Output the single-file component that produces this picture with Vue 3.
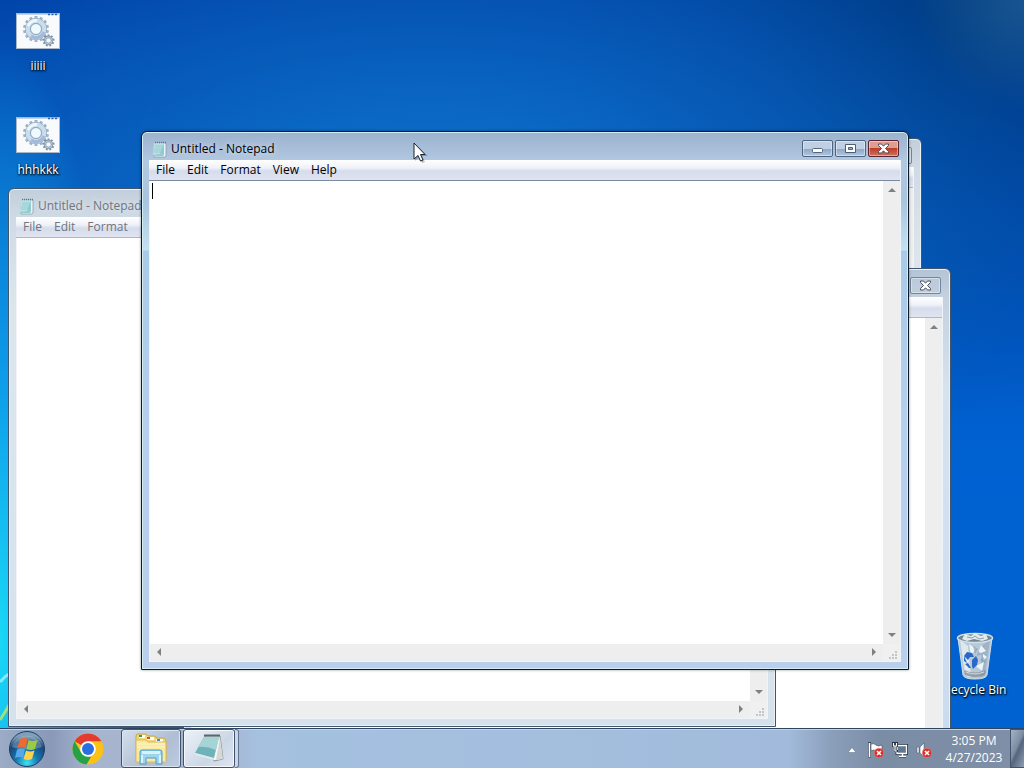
<script setup>
const menus = ['File', 'Edit', 'Format', 'View', 'Help']
const windows = [
  { id: 'back', title: '', menus: [], active: false },
  { id: 'right', title: '', menus: [], active: false },
  { id: 'left', title: 'Untitled - Notepad', menus: menus.slice(0, 3), active: false },
  { id: 'front', title: 'Untitled - Notepad', menus, active: true },
]
const files = ['iiiii', 'hhhkkk']
const teeth = Array.from({ length: 14 }, (_, i) => (i * 360) / 14)
const smallTeeth = Array.from({ length: 9 }, (_, i) => i * 40)
</script>

<template>
  <div class="screen">
    <main class="desktop">
      <svg class="wallpaper" viewBox="0 0 1024 728" preserveAspectRatio="none" aria-hidden="true">
        <path d="M0 682Q5 676 12 672" stroke="#a8f0ff" stroke-width="3" fill="none" opacity=".8" />
        <path d="M0 720Q6 711 12 700" stroke="#9fe07a" stroke-width="3" fill="none" />
      </svg>

      <ul class="files">
        <li v-for="name in files" :key="name">
          <a class="shortcut" href="#">
            <svg width="44" height="36" viewBox="0 0 44 36" aria-hidden="true">
              <rect x=".5" y=".5" width="43" height="35" fill="#f8fafc" stroke="#a9b7c8" />
              <path d="M1 1.500h42" stroke="#c3d3e6" />
              <path d="M32 1.500h9" stroke="#2b62ae" stroke-width="1.500" stroke-dasharray="2 1.500" />
              <g transform="translate(20 16)">
                <rect v-for="a in teeth" :key="a" x="-1.500" y="-13" width="3" height="5" fill="#9fb4c6" :transform="`rotate(${a})`" />
                <circle r="8.300" fill="none" stroke="#8fa6bd" stroke-width="5.400" />
                <circle r="8.300" fill="none" stroke="#c9ddec" stroke-width="4.400" />
                <path d="M-8 -3A8.500 8.500 0 0 1 1 -8.500" fill="none" stroke="#eef7fc" stroke-width="3" />
                <path d="M8 3A8.500 8.500 0 0 1 -5 7" fill="none" stroke="#a3b9da" stroke-width="3" />
                <circle r="5.500" fill="#eefafd" stroke="#8da5ba" />
              </g>
              <g transform="translate(32.500 27.500)">
                <rect v-for="a in smallTeeth" :key="a" x="-1" y="-6" width="2" height="3" fill="#7c8fa0" :transform="`rotate(${a})`" />
                <circle r="3.500" fill="#f3f8fb" stroke="#8499ac" stroke-width="2.400" />
                <circle r="3.500" fill="none" stroke="#bccddb" />
              </g>
            </svg>
            <span>{{ name }}</span>
          </a>
        </li>
      </ul>

      <a class="shortcut bin" href="#">
        <svg width="38" height="48" viewBox="0 0 38 48" aria-hidden="true">
          <path d="M2 6l5 37q1 4 12 4t12-4l5-37z" fill="#b7c9d7" stroke="#d0dfe9" />
          <path d="M4 8l5 34q1 3 6 3.500L12 14z" fill="#dde8ef" />
          <path d="M34 8l-5 34q-1 3-5 3.500l2-32z" fill="#9eb3c5" />
          <path d="M13 12l7 5-5 6zM25 13l5 6-8 3zM20 34l8-4-2 9zM9 30l4 5-3 2zM27 22l4 3-4 4z" fill="#edf4f8" />
          <path d="M17 14l5 3-3 5zM28 25l1 6-5-3zM22 19l4 3-5 2z" fill="#8199ae" opacity=".6" />
          <path d="M8 38q11 5 22 0l-1 5q-10 4-20 0z" fill="#87919a" opacity=".8" />
          <path d="M10 40q9 4 18 0" fill="none" stroke="#d4dbe0" />
          <ellipse cx="19" cy="6" rx="17.500" ry="4.500" fill="#708594" stroke="#d2dfe7" stroke-width="1.500" />
          <path d="M6 7L9 2l6 2 4-3 6 3 5-2 2 5-6 2-8-2-7 2z" fill="#e2eaee" />
          <path d="M11 5l5 1 3-2 4 3 5-1" fill="none" stroke="#8d9fac" />
          <path d="M8 24l3-4 5 1 2 4-4 0-2 3zM11 31l-3-2 0-5zM16 28l4-4 2 4-1 5-4 4-1-3zM12 31l3 5-2 0-4-4z" fill="#2a68c8" />
        </svg>
        <span>Recycle Bin</span>
      </a>

      <section
        v-for="w in windows"
        :key="w.id"
        class="window"
        :class="[w.id, { active: w.active }]"
        aria-label="Untitled - Notepad"
      >
        <header class="titlebar">
          <svg class="note" width="16" height="18" viewBox="0 0 16 18" aria-hidden="true">
            <path d="M3 3h11v13l-1 1H2z" fill="#e9f4f6" stroke="#7f98a6" stroke-width=".7" />
            <path d="M2 3h10v12l-1 1H1z" fill="#93cdd2" />
            <path d="M2 3h10l-4 11-7 1z" fill="#b9e1e4" />
            <path d="M3 6h8M3 8h8M2 10h9M2 12h9" stroke="#83bec8" stroke-width=".6" />
            <path d="M3 2.500h11" stroke="#5c7a86" stroke-width="1.500" stroke-dasharray="1 1" />
          </svg>
          <h1>{{ w.title }}</h1>
          <div class="controls">
            <button type="button" aria-label="Minimize">
              <svg width="13" height="11" viewBox="0 0 13 11"><rect x="1.500" y="5.500" width="10" height="4" rx="1" fill="#fff" stroke="#56657b" /></svg>
            </button>
            <button type="button" aria-label="Maximize">
              <svg width="13" height="11" viewBox="0 0 13 11"><path d="M1.500 1.500h10v8h-10z" fill="#fff" stroke="#4e5d73" /><path d="M4.500 4.500h4v2h-4z" fill="#9db3cf" stroke="#4e5d73" /></svg>
            </button>
            <button type="button" class="close" aria-label="Close">
              <svg width="13" height="11" viewBox="0 0 13 11"><path d="M1.500 1h3l2 2.200L8.500 1h3v1.500l-3 3 3 3V10h-3l-2-2.200L4.500 10h-3V8.500l3-3-3-3z" fill="#fff" stroke="#4b4f60" /></svg>
            </button>
          </div>
        </header>
        <div class="client">
          <nav class="menubar">
            <button v-for="m in w.menus" :key="m" type="button">{{ m }}</button>
          </nav>
          <div class="editor">
            <textarea aria-label="Document text" spellcheck="false"></textarea>
            <div class="vbar">
              <button type="button" aria-label="Scroll up"><svg width="8" height="5" viewBox="0 0 8 5"><path d="M0 5l4-4 4 4z" /></svg></button>
              <button type="button" aria-label="Scroll down"><svg width="8" height="5" viewBox="0 0 8 5"><path d="M0 0h8L4 4z" /></svg></button>
            </div>
            <div class="hbar">
              <button type="button" aria-label="Scroll left"><svg width="5" height="8" viewBox="0 0 5 8"><path d="M5 0v8L1 4z" /></svg></button>
              <button type="button" aria-label="Scroll right"><svg width="5" height="8" viewBox="0 0 5 8"><path d="M0 0v8l4-4z" /></svg></button>
            </div>
            <div class="grip">
              <svg width="9" height="9" viewBox="0 0 9 9"><path d="M7 0h2v2H7zM7 3h2v2H7zM7 6h2v2H7zM4 3h2v2H4zM4 6h2v2H4zM1 6h2v2H1z" fill="#c2c6ca" /></svg>
            </div>
            <span v-if="w.active" class="caret"></span>
          </div>
        </div>
      </section>

      <svg class="pointer" width="16" height="22" viewBox="0 0 16 22" aria-hidden="true">
        <path d="M2 2v17l4-4 3 6 3-1-3-6h6z" fill="#203050" opacity=".3" />
        <path d="M1 1v16l4-3.500 2.500 5.500 2.500-1-2.500-5.500H12z" fill="#fff" stroke="#1b2430" stroke-linejoin="round" />
      </svg>
    </main>

    <footer class="taskbar">
      <button type="button" class="start" aria-label="Start">
        <svg width="38" height="38" viewBox="0 0 38 38">
          <defs>
            <radialGradient id="orb" cx="50%" cy="90%" r="80%">
              <stop offset="0" stop-color="#3fe2f5" />
              <stop offset=".4" stop-color="#1678b0" />
              <stop offset=".8" stop-color="#1b4676" />
              <stop offset="1" stop-color="#7da1bc" />
            </radialGradient>
          </defs>
          <circle cx="19" cy="19" r="17.500" fill="url(#orb)" stroke="#1f3d60" />
          <path d="M4 17a15.500 15.500 0 0 1 30 0q-14 5-30 0z" fill="#fff" opacity=".25" />
          <path d="M12 9q4-2 7.500 0l-2 9q-4-2-8 0z" fill="#ee6a31" />
          <path d="M20.500 10q4 2 9 0l-2.500 9q-4 2-8.500 0z" fill="#9bcb45" />
          <path d="M9 19.500q4-2 8 0L15 28q-4-2-8 0z" fill="#55a9ea" />
          <path d="M18 20.500q4 2 8.500 0L24 29q-4 2-8.500 0z" fill="#fcd34b" />
        </svg>
      </button>
      <button type="button" class="pinned" aria-label="Google Chrome">
        <svg width="32" height="32" viewBox="0 0 32 32">
          <circle cx="16" cy="16" r="15.500" fill="#fbc116" />
          <path d="M2.600 8.200A15.500 15.500 0 0 1 29.400 8.200H16L9.200 12z" fill="#e33b2e" />
          <path d="M2.600 8.200L9.300 19.800 16 23.600l3 .4-4.500 7.500A15.500 15.500 0 0 1 2.600 8.200z" fill="#26a148" />
          <circle cx="16" cy="16" r="7.800" fill="#fff" />
          <circle cx="16" cy="16" r="6" fill="#2a6fe2" />
        </svg>
      </button>
      <button type="button" class="task" aria-label="Windows Explorer">
        <svg width="34" height="32" viewBox="0 0 34 32">
          <path d="M2 3l1-2h9l2 2h7l1 2h8l2 2v21H2z" fill="#eed679" stroke="#c6a950" />
          <path d="M5 2h6v3H5zM13 4h7v3h-7zM22 6h7v3h-7z" fill="#fff" />
          <path d="M5 2h3v2H5z" fill="#27a34a" /><path d="M13 4h3v2h-3z" fill="#e04634" /><path d="M23 6h3v2h-3z" fill="#3f88cb" />
          <path d="M2 7h10l2 2h18v20H2z" fill="#fae9a0" stroke="#d9bc62" />
          <path d="M3 11h28M3 14h28" stroke="#fdf5c8" />
          <path d="M6 19q0-2 2-2h18q2 0 2 2v12h-6v-6H12v6H6z" fill="#9bd5f0" stroke="#4f9cc7" />
          <path d="M8 18h18v3H8z" fill="#d8f3fd" /><path d="M8 22v8M26 22v8" stroke="#d8f3fd" stroke-width="2" />
        </svg>
      </button>
      <button type="button" class="task current" aria-label="Notepad">
        <svg width="34" height="32" viewBox="0 0 34 32">
          <path d="M13 3h15l3 23-9 2z" fill="#f5f6f5" stroke="#8a9396" />
          <path d="M28 4l3 22-7 1z" fill="#d5d8d6" />
          <path d="M12 4h15l-5 21L3 20z" fill="#6fb2b8" />
          <path d="M12 4h15l-3 13q-9-4-18-3z" fill="#a4d4d5" />
          <path d="M3 20l19 5v2L3 22z" fill="#dcebed" />
          <path d="M12 2.500h16" stroke="#59666b" stroke-width="2" />
        </svg>
      </button>
      <span class="stack"></span>
      <div class="tray">
        <button type="button" aria-label="Show hidden icons"><svg width="8" height="6" viewBox="0 0 8 6"><path d="M0 5.500L4 .5l4 5z" fill="#fff" stroke="#44546b" stroke-width=".4" /></svg></button>
        <button type="button" aria-label="Action Center">
          <svg width="16" height="16" viewBox="0 0 16 16"><path d="M1.500 0v15.500" stroke="#3d4a5c" stroke-width="3" /><path d="M1.500 1v14" stroke="#fff" stroke-width="1.600" /><path d="M3 2q3-1 5 1t6 0v7q-4 1-6-1t-5 0z" fill="#fff" stroke="#3d4a5c" stroke-width=".6" /><circle cx="11" cy="11" r="4.800" fill="#d6322d" stroke="#e98a84" stroke-width=".6" /><path d="M9 9l4 4M13 9l-4 4" stroke="#fff" stroke-width="1.600" /></svg>
        </button>
        <button type="button" aria-label="Network">
          <svg width="16" height="16" viewBox="0 0 16 16"><path d="M5 3.500h9.500v8H5zM7 14h7" fill="none" stroke="#1f2b39" stroke-width="2.800" /><path d="M5 3.500h9.500v8H5z" fill="#62788f" stroke="#fff" stroke-width="1.300" /><path d="M7 14.200h7M10.500 12v2" stroke="#fff" stroke-width="1.400" /><path d="M0 0h6v5H4.500v3H6v2H2V5H0z" fill="#26323f" /><path d="M1.500 1v3h3V1M3 4v5h2" fill="none" stroke="#fff" stroke-width="1.200" /></svg>
        </button>
        <button type="button" aria-label="Volume muted">
          <svg width="16" height="16" viewBox="0 0 16 16"><path d="M1 5h2v6H1zM4 5l4-4v14l-4-4z" fill="#fff" stroke="#3d4a5c" stroke-width=".5" /><circle cx="11" cy="11" r="4.800" fill="#d6322d" stroke="#e98a84" stroke-width=".6" /><path d="M9 9l4 4M13 9l-4 4" stroke="#fff" stroke-width="1.600" /></svg>
        </button>
      </div>
      <div class="clock"><time>3:05 PM</time><time>4/27/2023</time></div>
      <button type="button" class="peek" aria-label="Show desktop"></button>
    </footer>
  </div>
</template>

<style>
html, body { margin: 0; overflow: hidden; }
</style>

<style scoped>
.screen {
  height: 100vh;
  display: flex;
  flex-direction: column;
  font-family: "Open Sans", "Noto Sans", sans-serif;
  font-size: 12px;
  line-height: 16px;
}
button {
  border: 0;
  padding: 0;
  margin: 0;
  background: none;
  font: inherit;
  color: inherit;
  display: flex;
  align-items: center;
  justify-content: center;
}
.desktop {
  position: relative;
  flex: 1;
  min-height: 0;
  overflow: hidden;
  background:
    radial-gradient(ellipse 110px 110px at 100% 0%, rgba(60, 115, 150, .4), transparent),
    radial-gradient(ellipse 130px 600px at 0% 88%, #1ad8f6 0%, rgba(16, 165, 238, .85) 45%, rgba(8, 110, 220, 0) 100%),
    radial-gradient(ellipse 620px 330px at 42% 30%, #0f76d0 0%, rgba(10, 100, 190, .7) 55%, rgba(0, 72, 160, 0) 100%),
    radial-gradient(ellipse 420px 420px at 94% 0%, rgba(0, 62, 130, .9), rgba(0, 66, 146, .6) 50%, rgba(0, 80, 180, 0)),
    linear-gradient(#0042a8, #0054c0 28%, #0062d2 65%, #0062d0);
}
.wallpaper { position: absolute; inset: 0; width: 100%; height: 100%; }
.files {
  position: relative;
  display: inline-flex;
  flex-direction: column;
  gap: 43px;
  margin: 0;
  padding: 13px 0 0;
  list-style: none;
}
.shortcut {
  display: flex;
  flex-direction: column;
  align-items: center;
  gap: 9px;
  width: 76px;
  color: #fff;
  text-decoration: none;
  text-shadow: 1px 1px 2px #000, 0 1px 2px #000;
}
.bin { position: absolute; right: 11px; bottom: 30px; gap: 2px; }
.window {
  position: absolute;
  box-sizing: border-box;
  width: 768px;
  height: 539px;
  display: flex;
  flex-direction: column;
  padding: 0 7px 7px;
  border: 1px solid #40566f;
  border-radius: 6px 6px 0 0;
  background: linear-gradient(#c2cedb, #cfdae5 28px, #dbe6ec 120px, #d5e2ec);
  box-shadow: inset 0 0 0 1px #e9f1f6;
  color: #6e7580;
}
.window.back { left: 154px; top: 138px; }
.window.right { left: 183px; top: 268px; background: linear-gradient(#b4c4d6, #c5d1df 30px, #d6e2ee 120px, #c9daf0); }
.window.left { left: 8px; top: 188px; }
.window.front { left: 141px; top: 131px; }
.window.active {
  border-color: #0c1b2a;
  color: #000;
  background: linear-gradient(#9bb3ce, #a7bdd8 16px, #b3c8e0 29px, #a9c4de 70px, #c4e2f2 118px, #a9cbe8 119px, #b6cfec 300px, #bacfec);
  box-shadow: inset 0 0 0 1px #d3edf6, 0 0 3px rgba(0, 0, 0, .4);
}
.titlebar { display: flex; align-items: center; height: 28px; padding: 6px 2px 0 3px; box-sizing: border-box; }
.note { margin-right: 3px; }
.titlebar h1 {
  flex: 1;
  margin: 0;
  font-size: 12px;
  font-weight: 400;
  text-shadow: 0 0 6px rgba(255, 255, 255, .8);
}
.controls { display: flex; gap: 2px; padding-bottom: 2px; }
.controls button {
  box-sizing: border-box;
  width: 31px;
  height: 17px;
  border: 1px solid #75869c;
  border-radius: 2px;
  background: rgba(190, 205, 222, .4);
  box-shadow: inset 0 0 0 1px rgba(255, 255, 255, .4);
}
.active .controls button {
  border-color: #4f647f;
  background: linear-gradient(#bfd0e4 50%, #8ba4c3 50%, #b0c8e2);
}
.active .controls .close {
  border-color: #5a2430;
  background: linear-gradient(#de9d90 45%, #bb3f29 50%, #d0705a);
}
.client {
  flex: 1;
  min-height: 0;
  display: flex;
  flex-direction: column;
  border: solid #eef4f9;
  border-width: 0 1px 1px 0;
}
.menubar {
  display: flex;
  height: 20px;
  padding-left: 1px;
  border-bottom: 1px solid #7c8a9e;
  background: linear-gradient(#fff, #eef1f8 40%, #d7dcec 55%, #e0e4f1);
}
.menubar button { padding: 0 6px; }
.window:not(.active) .menubar { border-bottom-color: #b0b8c8; }
.editor {
  position: relative;
  flex: 1;
  min-height: 0;
  display: grid;
  grid-template-columns: 1fr 17px;
  grid-template-rows: 1fr 17px;
  border-left: 1px solid #f0f4f8;
}
textarea {
  border: 0;
  padding: 2px;
  margin: 0;
  resize: none;
  outline: 0;
  overflow: hidden;
  background: #fff;
  font: inherit;
}
.vbar, .hbar { display: flex; justify-content: space-between; background: #eeeeef; }
.hbar { align-items: flex-start; }
.vbar { flex-direction: column; }
.vbar button { width: 17px; height: 17px; }
.hbar button { width: 17px; height: 15px; }
.vbar path, .hbar path { fill: #7c8188; }
.grip { display: flex; align-items: flex-end; justify-content: flex-end; padding: 0 3px 1px 0; background: #f0f0f0; }
.caret { position: absolute; left: 2px; top: 2px; width: 1px; height: 16px; background: #000; }
.pointer { position: absolute; left: 413px; top: 142px; }
.taskbar {
  position: relative;
  display: flex;
  align-items: center;
  height: 40px;
  box-sizing: border-box;
  border-top: 1px solid #2e4562;
  background: linear-gradient(90deg, #9cacc6, #8899b9 5%, #a7b4cd 9%, #a6b4ce 22%, #a5c1e0 25%, #a2bbdc 77%, #8ca0bb 81%, #7b8ca5 86%, #7e8fa7 100%);
  box-shadow: inset 0 1px #c4d3e5;
}
.start { width: 54px; height: 38px; }
.pinned { width: 67px; }
.task {
  width: 60px;
  height: 39px;
  margin-right: 2px;
  border: 1px solid #3f5370;
  border-radius: 3px;
  box-sizing: border-box;
  background: linear-gradient(135deg, #d4dfec, #afbed3 60%, #bccbdf);
  box-shadow: inset 0 0 0 1px #d9e4f0;
}
.task.current { width: 52px; margin-right: 0; background: linear-gradient(135deg, #edf2f8, #ccd7e6 60%, #dde6f0); box-shadow: inset 0 0 0 1px #f4f8fb; }
.stack {
  width: 4px;
  height: 39px;
  box-sizing: border-box;
  border: 1px solid #60738f;
  border-left: 0;
  border-radius: 0 3px 3px 0;
  background: #cbd7e6;
}
.tray { display: flex; align-items: center; gap: 8px; margin-left: auto; padding-top: 2px; }
.tray button:first-child { margin-right: 4px; }
.clock {
  display: flex;
  flex-direction: column;
  align-items: center;
  width: 72px;
  padding: 1px 0 0 6px;
  line-height: 17px;
  color: #fff;
}
.peek {
  width: 14px;
  height: 39px;
  border: 1px solid #43536a;
  border-right: 0;
  box-sizing: border-box;
  background: linear-gradient(115deg, #a4b2c5, #7d8ca2 45%, #55657d 55%, #8f9fb5);
}
</style>
